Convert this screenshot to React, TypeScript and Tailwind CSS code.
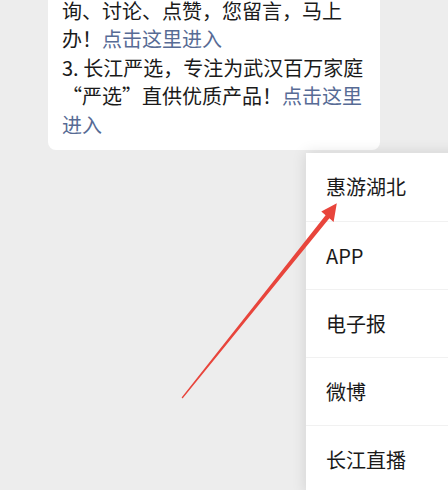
import React from 'react'

const font = { fontFamily: '"Noto Sans CJK SC", "Noto Sans", sans-serif' }

const menuItems = ['惠游湖北', 'APP', '电子报', '微博', '长江直播']

const Link = ({ children }: { children: React.ReactNode }) => (
  <span className="text-[#576b95]">{children}</span>
)

const Arrow = () => {
  return (
    <svg className="absolute left-0 top-0 pointer-events-none" width="448" height="490" viewBox="0 0 448 490">
      <polygon
        fill="#e8453c"
        points="181.6,397.6 325.6,215.2 321.3,211.5 336.8,203.3 333.6,221.9 329.4,218.2 182.6,398.4"
      />
    </svg>
  )
}

const App = () => {
  return (
    <div className="relative w-[448px] h-[490px] bg-[#ededed] overflow-hidden" style={font}>
      <div className="ml-[48px] w-[332px] bg-white rounded-b-[8px] pl-[14px] pb-[11px]">
        <div className="-mt-[3.5px] text-[20px] leading-[28.5px] text-[#1a1a1a] whitespace-nowrap">
          <div>询、讨论、点赞，您留言，马上</div>
          <div>办！<Link>点击这里进入</Link></div>
          <div>3. 长江严选，专注为武汉百万家庭</div>
          <div>“严选”直供优质产品！<Link>点击这里</Link></div>
          <div><Link>进入</Link></div>
        </div>
      </div>

      <div className="absolute left-[306px] top-[153px] w-[160px] bg-white shadow-[0_0_14px_rgba(0,0,0,0.12)]">
        {menuItems.map((item, i) => (
          <div
            key={item}
            className={`h-[68px] flex items-center pl-[20px] text-[20px] text-[#1a1a1a] ${i > 0 ? 'border-t border-[#f1f1f1]' : ''}`}
          >
            {item}
          </div>
        ))}
      </div>

      <Arrow />
    </div>
  )
}

export default App
